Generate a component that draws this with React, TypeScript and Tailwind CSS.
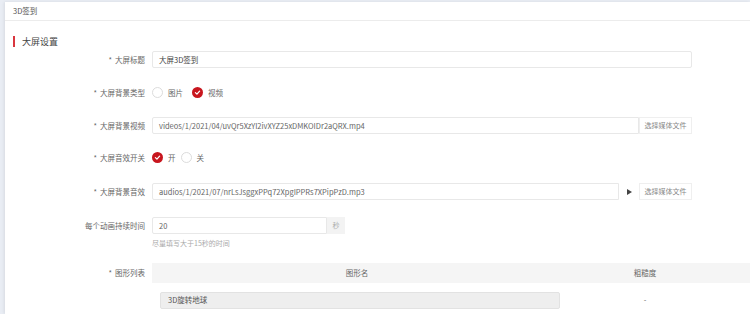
const font = { fontFamily: '"Noto Sans CJK SC", "Noto Sans", sans-serif' };

function Label({ text, required = true }: { text: string; required?: boolean }) {
  return (
    <div className="w-[140px] shrink-0 text-right text-[7.5px] text-[#666]">
      {required && <span className="mr-[3px]">*</span>}
      {text}
    </div>
  );
}

function Radio({ checked, label }: { checked: boolean; label: string }) {
  return (
    <div className="flex items-center mr-[5px]">
      {checked ? (
        <span className="w-[11px] h-[11px] rounded-full bg-[#c8161e] flex items-center justify-center">
          <svg width="7" height="7" viewBox="0 0 10 10">
            <path d="M2 5.2 L4.2 7.3 L8 3" fill="none" stroke="#fff" strokeWidth="1.8" strokeLinecap="round" strokeLinejoin="round" />
          </svg>
        </span>
      ) : (
        <span className="w-[11px] h-[11px] rounded-full border border-[#dcdcdc] bg-white" />
      )}
      <span className="ml-[5px] text-[7.5px] text-[#666]">{label}</span>
    </div>
  );
}

function MediaButton() {
  return (
    <div className="w-[53px] h-[17px] border border-[#efefef] flex items-center justify-center text-[7px] text-[#888] bg-white">
      选择媒体文件
    </div>
  );
}

export default function App() {
  return (
    <div className="w-[750px] h-[314px] overflow-hidden bg-[#e9edf4] pl-[5px] pt-[2px]" style={font}>
      <div className="bg-white h-full shadow-[-1px_0_3px_rgba(0,0,0,0.08)]">
        <div className="h-[19px] border-b border-[#ececec] flex items-center pl-[8px] text-[7.5px] text-[#555]">
          3D签到
        </div>

        <div className="mt-[15px] ml-[8px] flex items-center h-[11px]">
          <span className="w-[2px] h-[11px] bg-[#d9363e]" />
          <span className="ml-[7px] text-[9px] text-[#444]">大屏设置</span>
        </div>

        <div className="mt-[4px] flex items-center h-[17px]">
          <Label text="大屏标题" />
          <div className="ml-[7px] w-[540px] h-[17px] border border-[#e8e8e8] rounded-[2px] flex items-center px-[6px] text-[7.5px] text-[#444]">
            大屏3D签到
          </div>
        </div>

        <div className="mt-[16px] flex items-center h-[17px]">
          <Label text="大屏背景类型" />
          <div className="ml-[7px] flex items-center">
            <Radio checked={false} label="图片" />
            <span className="w-[4px]" />
            <Radio checked label="视频" />
          </div>
        </div>

        <div className="mt-[16px] flex items-center h-[17px]">
          <Label text="大屏背景视频" />
          <div className="ml-[7px] w-[487px] h-[17px] border border-[#e8e8e8] rounded-l-[2px] flex items-center px-[6px] text-[7.5px] text-[#666]">
            videos/1/2021/04/uvQr5XzYI2ivXYZ25xDMKOIDr2aQRX.mp4
          </div>
          <MediaButton />
        </div>

        <div className="mt-[15px] flex items-center h-[17px]">
          <Label text="大屏音效开关" />
          <div className="ml-[7px] flex items-center">
            <Radio checked label="开" />
            <Radio checked={false} label="关" />
          </div>
        </div>

        <div className="mt-[17px] flex items-center h-[17px]">
          <Label text="大屏背景音效" />
          <div className="ml-[7px] w-[467px] h-[17px] border border-[#e8e8e8] rounded-l-[2px] flex items-center px-[6px] text-[7.5px] text-[#666]">
            audios/1/2021/07/nrLsJsggxPPq72XpgIPPRs7XPipPzD.mp3
          </div>
          <div className="w-[20px] h-[17px] flex items-center justify-center">
            <svg width="5" height="6" viewBox="0 0 6 7">
              <path d="M0 0 L6 3.5 L0 7 Z" fill="#444" />
            </svg>
          </div>
          <MediaButton />
        </div>

        <div className="mt-[17px] flex items-center h-[17px]">
          <Label text="每个动画持续时间" required={false} />
          <div className="ml-[7px] w-[175px] h-[17px] border border-[#e8e8e8] rounded-l-[2px] flex items-center px-[6px] text-[7.5px] text-[#666]">
            20
          </div>
          <div className="w-[18px] h-[17px] bg-[#f3f3f3] flex items-center justify-center text-[7px] text-[#aaa]">秒</div>
        </div>
        <div className="ml-[147px] mt-[4px] text-[7px] text-[#aaa]">尽量填写大于15秒的时间</div>

        <div className="mt-[14px] flex">
          <div className="h-[20px] flex items-center">
            <Label text="图形列表" />
          </div>
          <div className="ml-[7px] flex-1">
            <div className="h-[20px] bg-[#f5f5f5] flex items-center text-[7.5px] text-[#666]">
              <div className="w-[410px] text-center">图形名</div>
              <div className="w-[166px] text-center">粗糙度</div>
            </div>
            <div className="flex items-center mt-[9px] h-[17px]">
              <div className="w-[410px] pl-[8px]">
                <div className="w-[400px] h-[17px] bg-[#eeeeee] border border-[#e2e2e2] rounded-[2px] flex items-center px-[7px] text-[7.5px] text-[#555]">
                  3D旋转地球
                </div>
              </div>
              <div className="w-[166px] text-center text-[7.5px] text-[#666]">-</div>
            </div>
          </div>
        </div>
      </div>
    </div>
  );
}
